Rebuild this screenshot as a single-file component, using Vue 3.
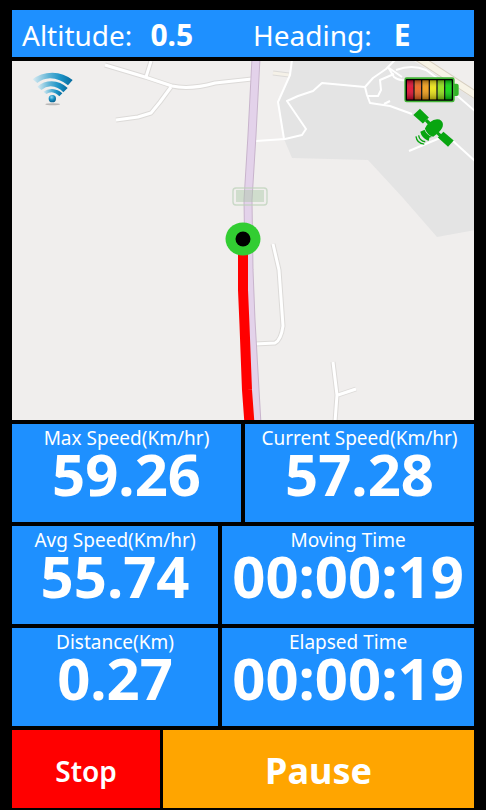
<script setup>
import { ref } from 'vue'

const readings = [
  { id: 'altitude', label: 'Altitude:', value: '0.5' },
  { id: 'heading', label: 'Heading:', value: 'E' },
]

const rows = [
  {
    id: 'speed',
    tiles: [
      { label: 'Max Speed(Km/hr)', value: '59.26' },
      { label: 'Current Speed(Km/hr)', value: '57.28' },
    ],
  },
  {
    id: 'moving',
    tiles: [
      { label: 'Avg Speed(Km/hr)', value: '55.74' },
      { label: 'Moving Time', value: '00:00:19' },
    ],
  },
  {
    id: 'elapsed',
    tiles: [
      { label: 'Distance(Km)', value: '0.27' },
      { label: 'Elapsed Time', value: '00:00:19' },
    ],
  },
]

const roads = [
  'M105 65 L145 77 L172 86 Q190 90 215 83 L252 79',
  'M151 61 L146 77',
  'M171 87 L160 102 L151 113 L138 117 L116 120',
  'M273 244 L279 270 L283 326 Q281 340 275 343 L255 344',
  'M333 362 L337 395 L335 422',
  'M338 395 L356 389',
]

// Drawn over the built-up area, slightly thinner
const lanes = [
  'M292 60 L290 75 L278 102 L284 139',
  'M395 60 L386 69 L373 78 L365 87 L322 83 L313 91 L298 96 L287 101 L306 129 L302 135 L285 139 L256 141',
  'M365 87 L367 95 L370 103 L390 106 L412 114',
  'M368 96 L378 96 L381 90 L380 80 L387 77 L394 74',
  'M388 67 L394 77 Q399 81 405 80',
  'M389 68 L402 77',
  'M396 70 Q412 64 426 70 L437 78',
  'M384 104 L390 101',
  'M409 151 L440 138',
  'M453 141 L476 162',
  'M453 92 L476 112',
]

const cells = ['#e0082c', '#ec641a', '#f09c14', '#ece410', '#8ee012', '#08d808']

const paused = ref(false)
</script>

<template>
  <main class="tracker">
    <header class="readings">
      <div
        v-for="item in readings"
        :key="item.id"
        class="reading"
        :class="`reading--${item.id}`"
      >
        <span>{{ item.label }}</span>
        <strong class="reading__value">{{ item.value }}</strong>
      </div>
    </header>

    <section class="map" aria-label="Map">
      <svg
        class="map__canvas"
        viewBox="12 61 462 359"
        preserveAspectRatio="xMidYMid slice"
        aria-hidden="true"
      >
        <rect x="12" y="61" width="462" height="359" fill="#f0eeed" />
        <path
          d="M292 60 L290 75 L278 102 L284 139 L292 158 L368 160 L403 198 L437 237 L476 230 V100 L412 60 Z"
          fill="#e4e4e4"
        />

        <path d="M414 55 L480 98" class="casing casing--major" />
        <path d="M414 55 L480 98" class="road road--major" />
        <path d="M273 73 L289 75" class="casing" />
        <path d="M273 73 L289 75" class="road road--track" />

        <path v-for="d in roads" :key="d" :d="d" class="casing" />
        <path v-for="d in roads" :key="d" :d="d" class="road" />
        <path v-for="d in lanes" :key="d" :d="d" class="road road--lane" />

        <path
          d="M256 58 L252 135 L248 200 L249 270 L251 320 L257 424"
          class="highway-edge"
        />
        <path
          d="M256 58 L252 135 L248 200 L249 270 L251 320 L257 424"
          class="highway"
        />

        <g fill="#a9c7a6" fill-opacity="0.45">
          <rect x="236" y="190" width="28" height="12" />
          <rect
            x="233"
            y="188"
            width="34"
            height="17"
            rx="3"
            fill="none"
            stroke="#b9d0b6"
            stroke-width="1.4"
            stroke-opacity="0.7"
          />
        </g>

        <path d="M243 250 L243 290 L244.500 325 L247 390 L249.500 424" class="trail" />
        <ellipse cx="243" cy="239" rx="17.500" ry="16.500" fill="#32cd32" />
        <circle cx="243" cy="239" r="7.500" fill="#000" />
      </svg>

      <svg class="map__signal" viewBox="96 210 126 110" role="img" aria-label="Signal">
        <defs>
          <linearGradient id="wave" x1="0" y1="0" x2="1" y2="0">
            <stop offset="0" stop-color="#d9ebf2" />
            <stop offset="0.4" stop-color="#5fb4d6" />
            <stop offset="0.7" stop-color="#1c93c6" />
            <stop offset="1" stop-color="#066a9d" />
          </linearGradient>
          <radialGradient id="dot" cx="0.4" cy="0.3" r="0.7">
            <stop offset="0" stop-color="#8fd4ee" />
            <stop offset="0.5" stop-color="#1a91c4" />
            <stop offset="1" stop-color="#04608f" />
          </radialGradient>
        </defs>
        <ellipse cx="158" cy="313" rx="22" ry="3" fill="#b9b7b6" />
        <g fill="url(#wave)">
          <path d="M98 238 Q120 219 157 218 Q192 219 218 240 L204 256 Q180 236 150 235 Q128 236 112 249 Z" />
          <path d="M112 260 Q130 244 155 244 Q182 245 203 264 L190 277 Q175 260 152 259 Q136 260 124 270 Z" />
          <path d="M130 275 Q143 266 157 267 Q174 268 187 280 L178 289 Q168 278 155 277 Q146 277 139 282 Z" />
        </g>
        <circle cx="157" cy="296" r="11" fill="url(#dot)" />
      </svg>

      <div class="map__status">
        <svg class="battery" viewBox="0 0 165 78" role="img" aria-label="Battery full">
          <defs>
            <linearGradient id="shine" x1="0" y1="0" x2="0" y2="1">
              <stop offset="0" stop-color="#000" stop-opacity="0.35" />
              <stop offset="0.4" stop-color="#fff" stop-opacity="0.08" />
              <stop offset="1" stop-color="#000" stop-opacity="0.35" />
            </linearGradient>
          </defs>
          <rect x="144" y="20" width="20" height="37" rx="6" fill="#32b428" />
          <rect x="1" y="1" width="151" height="75" rx="7" fill="#42b436" />
          <rect x="5" y="6" width="142" height="65" rx="3" fill="#000" />
          <rect
            v-for="(color, i) in cells"
            :key="color"
            :x="9 + i * 23"
            y="10"
            width="19"
            height="57"
            :fill="color"
          />
          <rect x="9" y="10" width="135" height="57" fill="url(#shine)" />
        </svg>

        <svg class="satellite" viewBox="14 14 124 118" role="img" aria-label="GPS fix">
          <g fill="#08a510">
            <path d="M15 35 L35 16 L62 43 L44 61 Z" />
            <path d="M50 54 L57 47 L68 58 L60 65 Z" />
            <path d="M50 76 Q54 65 65 57 Q80 45 94 49 Q107 55 104 69 Q101 81 84 94 L75 101 Q56 96 50 76 Z" />
            <path d="M36 86 L49 80 Q55 96 72 102 L64 103 L61 114 Q40 105 36 86 Z" />
            <path d="M84 92 L91 86 L101 95 L94 102 Z" />
            <path d="M89 103 L106 86 L137 112 L120 131 Z" />
          </g>
          <g fill="none" stroke="#08a510" stroke-width="4">
            <path d="M31 97 Q34 114 51 116" />
            <path d="M23 100 Q26 122 48 123" />
          </g>
        </svg>
      </div>
    </section>

    <section
      v-for="row in rows"
      :key="row.id"
      class="row"
      :class="`row--${row.id}`"
    >
      <div v-for="tile in row.tiles" :key="tile.label" class="tile">
        <span class="tile__label">{{ tile.label }}</span>
        <strong class="tile__value">{{ tile.value }}</strong>
      </div>
    </section>

    <footer class="actions">
      <button type="button" class="action action--stop">Stop</button>
      <button
        type="button"
        class="action action--pause"
        :aria-pressed="paused"
        @click="paused = !paused"
      >
        Pause
      </button>
    </footer>
  </main>
</template>

<style>
body {
  margin: 0;
  background: #000;
}
</style>

<style scoped>
.tracker {
  box-sizing: border-box;
  min-height: 100vh;
  padding: 10px 12px 2px;
  display: flex;
  flex-direction: column;
  gap: 4px;
  background: #000;
  color: #fff;
  font-family: 'Noto Sans', 'Open Sans', sans-serif;
}

.readings {
  display: grid;
  grid-template-columns: 1fr 1fr;
  padding-top: 3px;
  background: #1e90ff;
  font-size: 28px;
  line-height: 44px;
}

.reading {
  display: flex;
  align-items: baseline;
  gap: 18px;
  padding-left: 10px;
}

.reading--heading {
  gap: 22px;
}

.reading__value {
  font-size: 30px;
}

.map {
  position: relative;
  flex: 1;
  min-height: 240px;
  overflow: hidden;
  background: #f0eeed;
}

.map__canvas {
  position: absolute;
  inset: 0;
  width: 100%;
  height: 100%;
}

.casing,
.road,
.highway,
.highway-edge,
.trail {
  fill: none;
  stroke-linejoin: round;
}

.casing {
  stroke: #dcdad8;
  stroke-width: 5px;
}

.casing--major {
  stroke: #d6cfc0;
  stroke-width: 8px;
}

.road {
  stroke: #fff;
  stroke-width: 3px;
}

.road--major {
  stroke: #f7f3e6;
  stroke-width: 6px;
}

.road--track {
  stroke: #f5f1e8;
}

.road--lane {
  stroke-width: 2px;
}

.highway-edge {
  stroke: #c8b4cc;
  stroke-width: 9px;
}

.highway {
  stroke: #e3d2ea;
  stroke-width: 7px;
}

.trail {
  stroke: #f00;
  stroke-width: 10px;
}

.map__signal {
  position: absolute;
  top: 9px;
  left: 20px;
  width: 42px;
}

.map__status {
  position: absolute;
  top: 16px;
  right: 15px;
  display: flex;
  flex-direction: column;
  align-items: center;
  gap: 5px;
}

.battery {
  width: 55px;
}

.satellite {
  width: 41px;
  margin-left: 4px;
}

.row {
  display: grid;
  grid-template-columns: 9fr 11fr;
  gap: 4px;
}

.row--speed {
  grid-template-columns: 1fr 1fr;
}

.tile {
  display: flex;
  flex-direction: column;
  align-items: center;
  padding: 2px 0 24px;
  background: #1e90ff;
  white-space: nowrap;
}

.tile__label {
  font-size: 19px;
  line-height: 24px;
}

.tile__value {
  font-size: 58px;
  line-height: 48px;
}

.actions {
  display: grid;
  grid-template-columns: 10fr 21fr;
  gap: 3px;
}

.action {
  height: 78px;
  padding: 3px 0 0;
  border: 0;
  color: #fff;
  font-family: inherit;
  cursor: pointer;
}

.action--stop {
  background: #f00;
  font-size: 28px;
  font-weight: 600;
}

.action--pause {
  background: #ffa500;
  font-size: 36px;
  font-weight: 700;
}
</style>
